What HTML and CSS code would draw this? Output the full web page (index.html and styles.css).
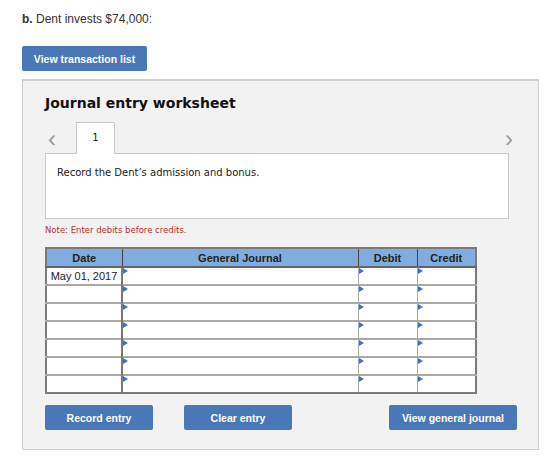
FILE: index.html
```html
<!DOCTYPE html>
<html lang="en">
<head>
  <meta charset="UTF-8" />
  <title>Journal entry worksheet</title>
  <link rel="stylesheet" href="styles.css">
</head>
<body>

<p class="question"><b>b.</b> Dent invests $74,000:</p>

<button class="btn btn-list" type="button">View transaction list</button>

<div class="worksheet">
  <h2 class="ws-title">Journal entry worksheet</h2>

  <div class="tabs">
    <span class="arrow">&lsaquo;</span>
    <span class="tab">1</span>
    <span class="arrow arrow-right">&rsaquo;</span>
  </div>

  <div class="prompt">Record the Dent&rsquo;s admission and bonus.</div>

  <p class="note">Note: Enter debits before credits.</p>

  <table class="journal">
    <colgroup>
      <col class="col-date">
      <col class="col-gj">
      <col class="col-num">
      <col class="col-num">
    </colgroup>
    <thead>
      <tr>
        <th>Date</th>
        <th>General Journal</th>
        <th>Debit</th>
        <th>Credit</th>
      </tr>
    </thead>
    <tbody>
      <tr><td>May 01, 2017</td><td class="mark"></td><td class="mark"></td><td class="mark"></td></tr>
      <tr><td></td><td class="mark"></td><td class="mark"></td><td class="mark"></td></tr>
      <tr><td></td><td class="mark"></td><td class="mark"></td><td class="mark"></td></tr>
      <tr><td></td><td class="mark"></td><td class="mark"></td><td class="mark"></td></tr>
      <tr><td></td><td class="mark"></td><td class="mark"></td><td class="mark"></td></tr>
      <tr><td></td><td class="mark"></td><td class="mark"></td><td class="mark"></td></tr>
      <tr><td></td><td class="mark"></td><td class="mark"></td><td class="mark"></td></tr>
    </tbody>
  </table>

  <div class="actions">
    <button class="btn btn-action" type="button">Record entry</button>
    <button class="btn btn-action" type="button">Clear entry</button>
    <button class="btn btn-action btn-wide" type="button">View general journal</button>
  </div>
</div>

</body>
</html>
```

FILE: styles.css
```css
body {
  font-family: "Liberation Sans", Arial, sans-serif;
  background-color: #fff;
  margin: 0;
  padding: 0 21px 0 22px;
  color: #222;
}
.question {
  margin: 0;
  padding-top: 12px;
  font-size: 12px;
  line-height: 14px;
  color: #333;
}
.btn {
  background-color: #4a78b6;
  color: #fff;
  border: none;
  border-radius: 2px;
  font-family: "Liberation Sans", Arial, sans-serif;
  font-weight: bold;
  font-size: 10.5px;
  height: 25px;
  padding: 0;
  cursor: pointer;
}
.btn-list {
  display: block;
  margin-top: 20px;
  width: 125px;
}
.worksheet {
  margin-top: 8px;
  width: 517px;
  box-sizing: border-box;
  height: 371px;
  background-color: #f2f2f2;
  border: 1px solid #d0d0d0;
  border-top-width: 2px;
  padding: 0 29px 0 22px;
}
.ws-title {
  margin: 13px 0 0;
  font-family: "DejaVu Sans", Verdana, sans-serif;
  font-size: 14px;
  line-height: 18px;
  color: #111;
}
.tabs {
  display: flex;
  align-items: flex-end;
  margin-top: 10px;
  height: 31px;
}
.arrow {
  width: 28px;
  padding-left: 3px;
  font-size: 24px;
  line-height: 22px;
  color: #999;
  align-self: center;
  margin-top: 2px;
}
.arrow-right {
  margin-left: auto;
  width: auto;
  padding-left: 0;
  margin-right: -4px;
}
.tab {
  width: 39px;
  height: 32px;
  box-sizing: border-box;
  background-color: #fff;
  border: 1px solid #c8c8c8;
  border-bottom: none;
  margin-bottom: -1px;
  position: relative;
  z-index: 1;
  text-align: center;
  font-family: "DejaVu Sans", Verdana, sans-serif;
  font-size: 10px;
  line-height: 30px;
  color: #222;
}
.prompt {
  height: 66px;
  box-sizing: border-box;
  background-color: #fff;
  border: 1px solid #c8c8c8;
  padding: 12px 11px;
  font-family: "DejaVu Sans", Verdana, sans-serif;
  font-size: 10px;
  line-height: 14px;
  color: #222;
}
.note {
  margin: 6px 0 0;
  font-family: "DejaVu Sans", Verdana, sans-serif;
  font-size: 8.5px;
  line-height: 10px;
  color: #b8312f;
}
.journal {
  margin-top: 12px;
  width: 432px;
  table-layout: fixed;
  border-collapse: collapse;
  background-color: #fff;
  font-size: 11px;
  border: 2px solid #7a7a7a;
}
.journal th {
  background-color: #80acdf;
  height: 17px;
  padding: 0;
  border: 1px solid #444;
  border-bottom: 2px solid #666;
  font-weight: bold;
  color: #222;
}
.journal td {
  height: 16px;
  padding: 0 6px;
  border: 1px solid #aaa;
  border-top-width: 2px;
  vertical-align: middle;
  white-space: nowrap;
  color: #222;
}
.journal td:first-child {
  border-right: 2px solid #777;
  padding: 0;
  text-align: center;
}
.col-date { width: 76px; }
.col-num { width: 59px; }
.mark {
  position: relative;
}
.mark::before {
  content: "";
  position: absolute;
  left: 0;
  top: 0;
  border-left: 5px solid #3b72c2;
  border-top: 3.5px solid transparent;
  border-bottom: 3.5px solid transparent;
}
.actions {
  display: flex;
  margin-top: 11px;
}
.btn-action {
  width: 108px;
  margin-right: 31px;
}
.btn-wide {
  width: 128px;
  margin-left: auto;
  margin-right: -8px;
}
```
